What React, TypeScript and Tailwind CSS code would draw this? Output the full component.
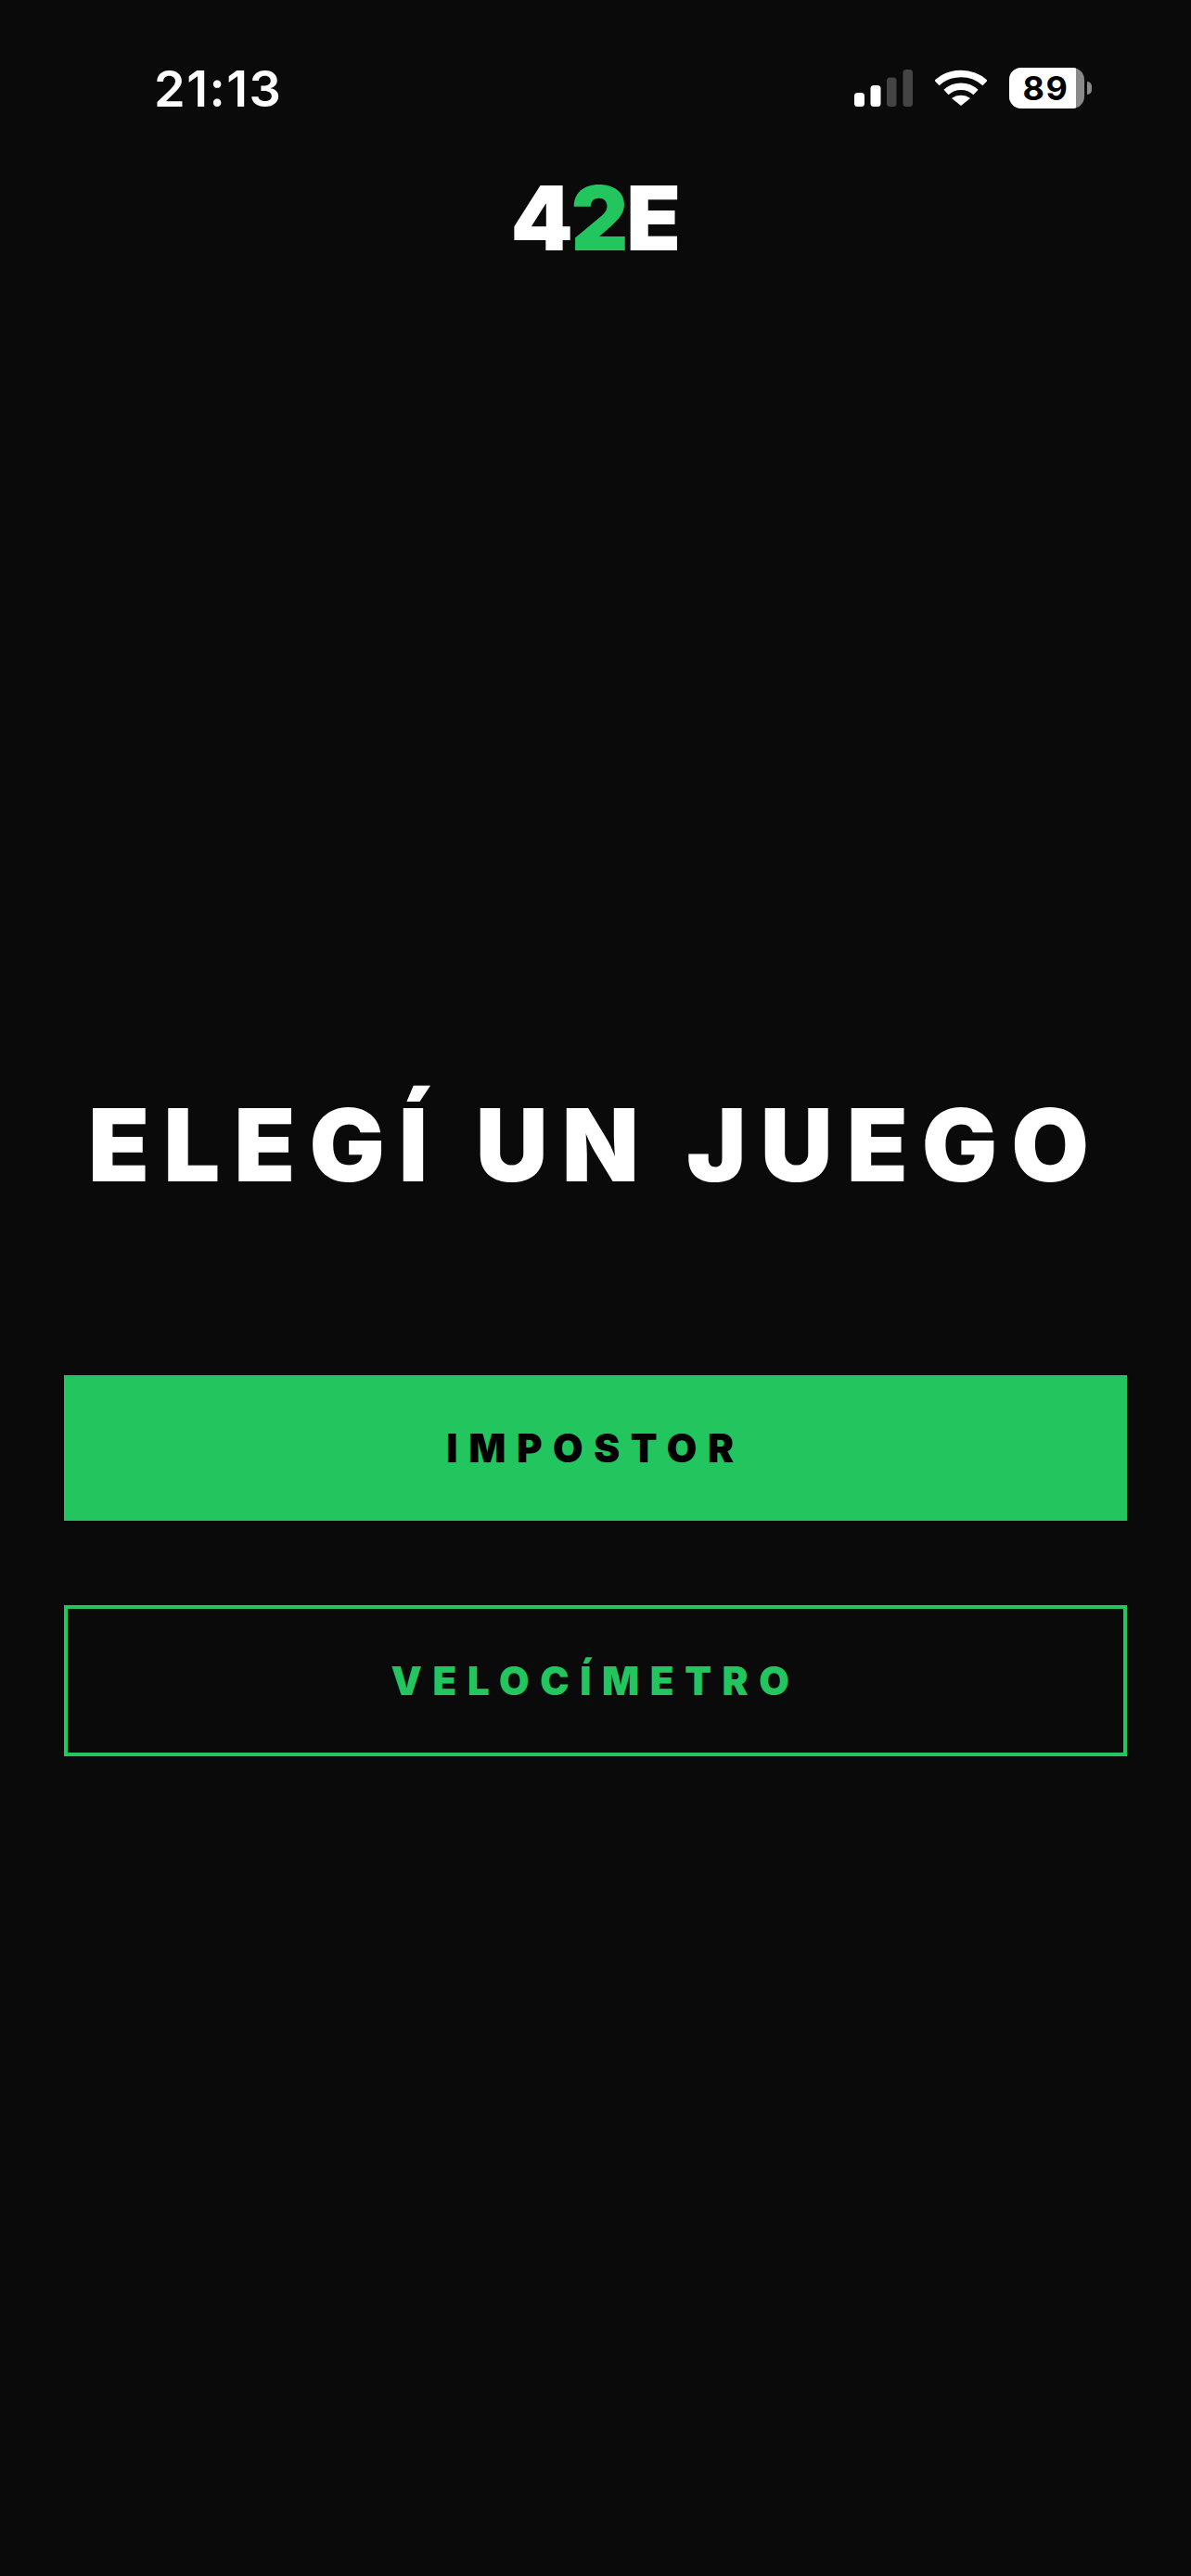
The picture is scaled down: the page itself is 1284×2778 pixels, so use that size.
export default function App() {
  return (
    <div className="w-[1284px] h-[2778px] bg-[#0a0a0a] text-white flex flex-col font-['Inter',sans-serif]">
      <div className="mt-[60px] h-[70px] pl-[166px] pr-[107px] flex items-center justify-between">
        <span className="text-[54px] leading-none font-semibold tracking-[1.5px] pt-[2px]">21:13</span>
        <div className="flex items-center">
          <svg width="64" height="40" viewBox="0 0 64 40" className="mr-[23px]">
            <rect x="0" y="25" width="11" height="15" rx="3.5" fill="#ffffff" />
            <rect x="17.5" y="17" width="11" height="23" rx="3.5" fill="#ffffff" />
            <rect x="35" y="8.5" width="10.5" height="31.5" rx="3.5" fill="#444444" />
            <rect x="52.5" y="0" width="10.5" height="40" rx="3.5" fill="#444444" />
          </svg>
          <svg width="56" height="42" viewBox="0 0 56 42" className="mr-[24px]">
            <path d="M2 15.5C16 2 40 2 54 15.5" fill="none" stroke="#ffffff" strokeWidth="7.5" />
            <path d="M12 25.5C21 17 35 17 44 25.5" fill="none" stroke="#ffffff" strokeWidth="7.5" />
            <path d="M28 40L18 32C23.5 27.5 32.5 27.5 38 32Z" fill="#ffffff" />
          </svg>
          <div className="relative w-[81px] h-[44px] rounded-[13px] bg-[#8a8a8a] overflow-hidden">
            <div className="w-[72px] h-full bg-white flex items-center justify-center pl-[7px] text-black text-[36px] font-bold leading-none tracking-[1.5px]">
              89
            </div>
          </div>
          <div className="ml-[3px] w-[5px] h-[14px] bg-[#8a8a8a] rounded-r-full" />
        </div>
      </div>
      <div className="mt-[57px] text-center text-[96px] leading-[96px] font-black tracking-[-2.4px] pr-[2px]">
        4<span className="text-[#22c55e]">2</span>E
      </div>
      <h1 className="mt-[898px] text-center text-[108px] leading-[108px] font-black tracking-[15px]">
        ELEGÍ UN JUEGO
      </h1>
      <div className="mt-[194px] mx-[69px] flex flex-col gap-[91px]">
        <button className="h-[157px] bg-[#22c55e] text-black text-[42px] font-black tracking-[11.6px]">
          IMPOSTOR
        </button>
        <button className="h-[163px] border-[4px] border-[#22c55e] text-[#22c55e] text-[42px] font-black tracking-[11.6px]">
          VELOCÍMETRO
        </button>
      </div>
    </div>
  );
}
